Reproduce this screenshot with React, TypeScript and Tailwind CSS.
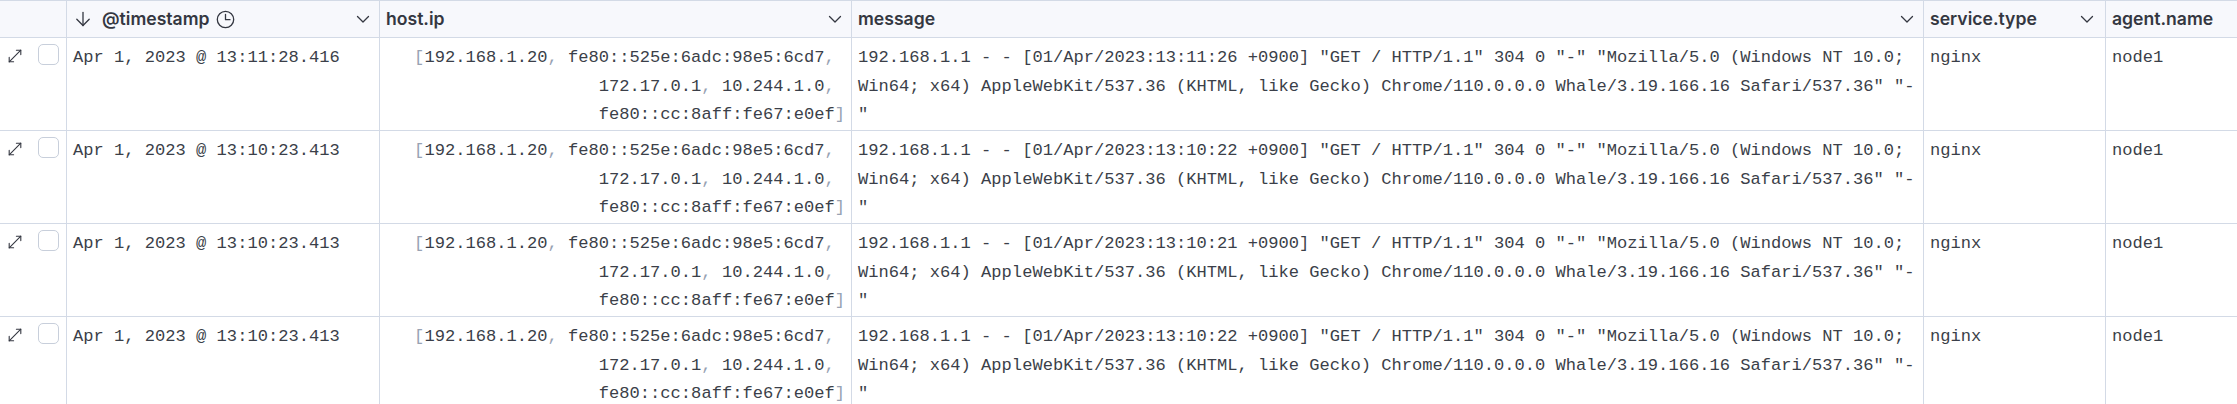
import React from "react";

const rows = [
  { ts: "Apr 1, 2023 @ 13:11:28.416", t: "13:11:26" },
  { ts: "Apr 1, 2023 @ 13:10:23.413", t: "13:10:22" },
  { ts: "Apr 1, 2023 @ 13:10:23.413", t: "13:10:21" },
  { ts: "Apr 1, 2023 @ 13:10:23.413", t: "13:10:22" },
];

function Chevron() {
  return (
    <svg width="16" height="16" viewBox="0 0 16 16" fill="none" className="shrink-0">
      <path d="M2.5 5.5 L8 11 L13.5 5.5" stroke="#343741" strokeWidth="1.3" strokeLinecap="round" strokeLinejoin="round" />
    </svg>
  );
}

function SortArrow() {
  return (
    <svg width="16" height="16" viewBox="0 0 16 16" fill="none" className="shrink-0">
      <path d="M8 1.5 V14.5" stroke="#343741" strokeWidth="1.3" strokeLinecap="round" />
      <path d="M1.8 8.3 L8 14.5 L14.2 8.3" stroke="#343741" strokeWidth="1.3" strokeLinecap="round" strokeLinejoin="round" />
    </svg>
  );
}

function ClockIcon() {
  return (
    <svg width="19" height="19" viewBox="0 0 19 19" fill="none" className="shrink-0">
      <circle cx="9.5" cy="9.5" r="8.2" stroke="#343741" strokeWidth="1.3" />
      <path d="M9.5 4.3 V9.7 H14" stroke="#343741" strokeWidth="1.3" strokeLinecap="round" strokeLinejoin="round" />
    </svg>
  );
}

function ExpandIcon() {
  return (
    <svg width="16" height="16" viewBox="0 0 16 16" fill="none" className="shrink-0">
      <path d="M2.2 13.8 L13.8 2.2" stroke="#343741" strokeWidth="1.1" strokeLinecap="round" />
      <path d="M9.4 2.2 H13.8 V6.6" stroke="#343741" strokeWidth="1.1" strokeLinecap="round" strokeLinejoin="round" />
      <path d="M2.2 9.4 V13.8 H6.6" stroke="#343741" strokeWidth="1.1" strokeLinecap="round" strokeLinejoin="round" />
    </svg>
  );
}

const P = ({ children }: { children: React.ReactNode }) => (
  <span className="text-[#98a2b3]">{children}</span>
);

export default function App() {
  return (
    <div className="w-[2237px] h-[404px] overflow-hidden bg-white">
      {/* Header */}
      <div className="flex h-[38px] border-t border-b border-[#d3dae6] bg-[#f7f8fc] font-['Inter',sans-serif] text-[17.6px] font-semibold text-[#343741]">
        <div className="w-[67px] shrink-0 border-r border-[#d3dae6]" />
        <div className="w-[313px] shrink-0 border-r border-[#d3dae6] flex items-center pl-[8px] pr-[8px]">
          <SortArrow />
          <span className="ml-[11px]">@timestamp</span>
          <span className="ml-[6px] flex items-center"><ClockIcon /></span>
          <span className="flex-1" />
          <Chevron />
        </div>
        <div className="w-[472px] shrink-0 border-r border-[#d3dae6] flex items-center pl-[6px] pr-[8px]">
          <span>host.ip</span>
          <span className="flex-1" />
          <Chevron />
        </div>
        <div className="w-[1072px] shrink-0 border-r border-[#d3dae6] flex items-center pl-[6px] pr-[8px]">
          <span>message</span>
          <span className="flex-1" />
          <Chevron />
        </div>
        <div className="w-[182px] shrink-0 border-r border-[#d3dae6] flex items-center pl-[6px] pr-[10px]">
          <span>service.type</span>
          <span className="flex-1" />
          <Chevron />
        </div>
        <div className="flex-1 flex items-center pl-[6px]">
          <span>agent.name</span>
        </div>
      </div>

      {/* Rows */}
      {rows.map((r, i) => (
        <div
          key={i}
          className="flex h-[93px] border-b border-[#d3dae6] font-['Liberation_Mono',monospace] text-[17.1px] leading-[28.5px] text-[#3b3f49]"
        >
          <div className="w-[67px] shrink-0 border-r border-[#d3dae6] flex items-start pl-[7px]">
            <div className="mt-[10px]">
              <ExpandIcon />
            </div>
            <div className="mt-[6px] ml-[15px] w-[21px] h-[21px] rounded-[5px] border border-[#c8cfdb] bg-white" />
          </div>
          <div className="w-[313px] shrink-0 border-r border-[#d3dae6] pt-[6px] pl-[6px] whitespace-pre">
            {r.ts}
          </div>
          <div className="w-[472px] shrink-0 border-r border-[#d3dae6] pt-[6px] pr-[6px] text-right whitespace-pre">
            <div>
              <P>[</P>192.168.1.20<P>, </P>fe80::525e:6adc:98e5:6cd7<P>, </P>
            </div>
            <div>
              172.17.0.1<P>, </P>10.244.1.0<P>, </P>
            </div>
            <div>
              fe80::cc:8aff:fe67:e0ef<P>]</P>
            </div>
          </div>
          <div className="w-[1072px] shrink-0 border-r border-[#d3dae6] pt-[6px] pl-[6px] whitespace-pre overflow-hidden">
            <div>{`192.168.1.1 - - [01/Apr/2023:${r.t} +0900] "GET / HTTP/1.1" 304 0 "-" "Mozilla/5.0 (Windows NT 10.0;`}</div>
            <div>{`Win64; x64) AppleWebKit/537.36 (KHTML, like Gecko) Chrome/110.0.0.0 Whale/3.19.166.16 Safari/537.36" "-`}</div>
            <div>{`"`}</div>
          </div>
          <div className="w-[182px] shrink-0 border-r border-[#d3dae6] pt-[6px] pl-[6px] whitespace-pre">
            nginx
          </div>
          <div className="flex-1 pt-[6px] pl-[6px] whitespace-pre">node1</div>
        </div>
      ))}
    </div>
  );
}
